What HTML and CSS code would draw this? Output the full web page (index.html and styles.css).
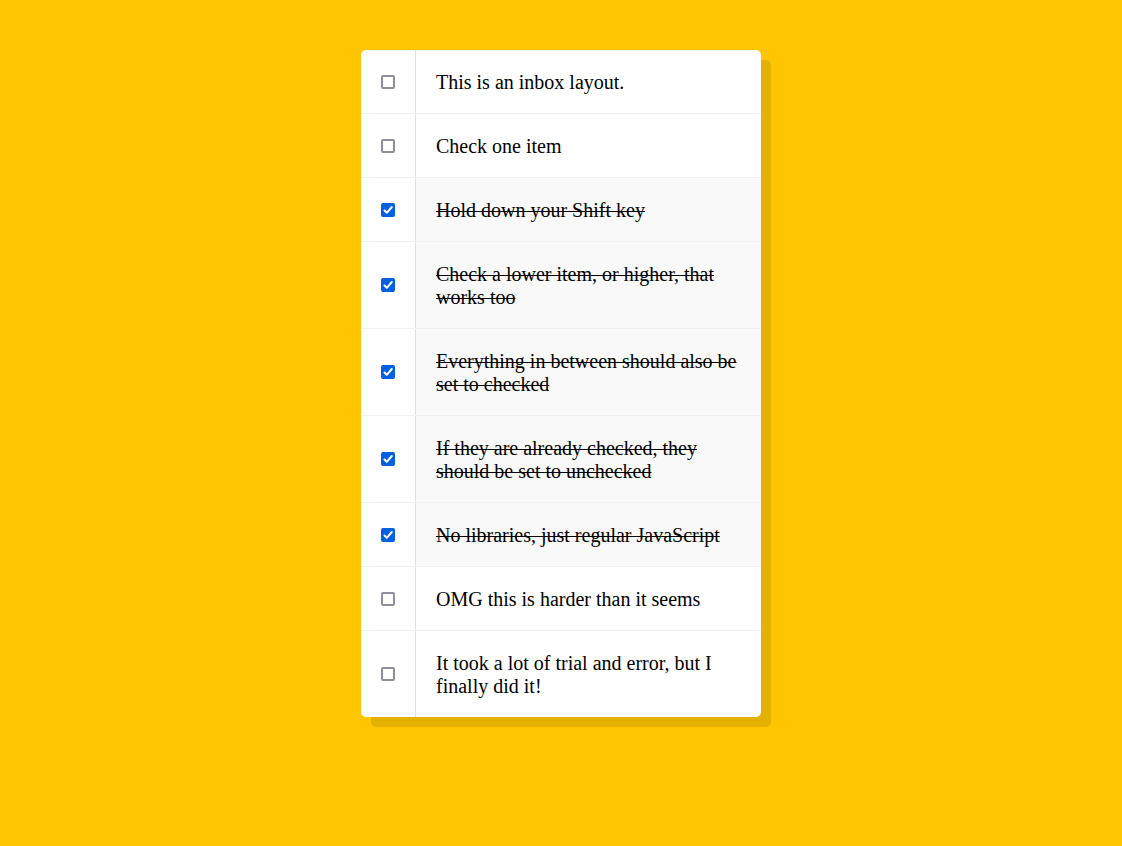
FILE: index.html
```html
<!DOCTYPE html>
<html lang="en">
<head>
<meta charset="utf-8">
<meta name="viewport" content="width=device-width, initial-scale=1">
<title>Hold Shift to Check Multiple Checkboxes</title>
<link rel="stylesheet" href="styles.css">
</head>
<body>
<main class="inbox">
  <div class="item"><input class="check" type="checkbox" id="c1"><label class="text" for="c1">This is an inbox layout.</label></div>
  <div class="item"><input class="check" type="checkbox" id="c2"><label class="text" for="c2">Check one item</label></div>
  <div class="item"><input class="check" type="checkbox" id="c3" checked><label class="text" for="c3">Hold down your Shift key</label></div>
  <div class="item"><input class="check" type="checkbox" id="c4" checked><label class="text" for="c4">Check a lower item, or higher, that works too</label></div>
  <div class="item"><input class="check" type="checkbox" id="c5" checked><label class="text" for="c5">Everything in between should also be set to checked</label></div>
  <div class="item"><input class="check" type="checkbox" id="c6" checked><label class="text" for="c6">If they are already checked, they should be set to unchecked</label></div>
  <div class="item"><input class="check" type="checkbox" id="c7" checked><label class="text" for="c7">No libraries, just regular JavaScript</label></div>
  <div class="item"><input class="check" type="checkbox" id="c8"><label class="text" for="c8">OMG this is harder than it seems</label></div>
  <div class="item"><input class="check" type="checkbox" id="c9"><label class="text" for="c9">It took a lot of trial and error, but I finally did it!</label></div>
</main>
</body>
</html>
```
FILE: styles.css
```css
*, *::before, *::after {
  box-sizing: border-box;
}

body {
  margin: 0;
  background: #ffc600;
  font-family: "Liberation Serif", "Times New Roman", serif;
  font-size: 20px;
  line-height: 23px;
}

.inbox {
  max-width: 400px;
  margin: 50px auto;
  background: #fff;
  border-radius: 5px;
  box-shadow: 10px 10px 0 rgba(0, 0, 0, 0.1);
}

.item {
  display: flex;
  align-items: center;
  border-bottom: 1px solid #f1f1f1;
}

.item:last-child {
  border-bottom: 0;
}

.check {
  appearance: none;
  flex: none;
  width: 14px;
  height: 14px;
  margin: 20px;
  border: 2px solid #8f8f9d;
  border-radius: 2px;
  background: #fff center / 14px 14px no-repeat;
}

.check:checked {
  border: 0;
  background-color: #0060df;
  background-image: url("data:image/svg+xml,%3Csvg xmlns='http://www.w3.org/2000/svg' viewBox='0 0 14 14'%3E%3Cpath d='M3.500 7.500 5.800 9.800l5-5.800' fill='none' stroke='%23fff' stroke-width='2' stroke-linecap='round' stroke-linejoin='round'/%3E%3C/svg%3E");
}

.text {
  flex: 1;
  padding: 21px 20px 19px;
  border-left: 1px solid #d1e2ff;
}

.check:checked + .text {
  background: #f9f9f9;
  text-decoration: line-through 1px;
}
```
